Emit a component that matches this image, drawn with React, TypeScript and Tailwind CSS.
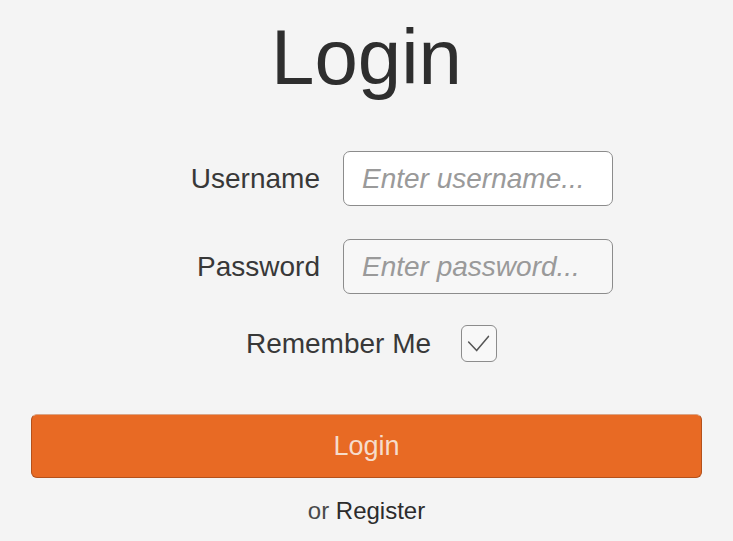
import React, { useState } from 'react';

const App: React.FC = () => {
  const [username, setUsername] = useState('');
  const [password, setPassword] = useState('');
  const [remember, setRemember] = useState(true);

  return (
    <div className="min-h-[541px] w-full bg-[#f4f4f4] flex flex-col items-center font-['Liberation_Sans',Arial,sans-serif] text-[#383838]">
      <h1 className="mt-[18px] text-[78px] leading-[79px] text-[#2e2e2e]">Login</h1>

      <div className="mt-[54px] grid grid-cols-[200px_270px] gap-x-[23px] gap-y-[33px] items-center">
        <label className="text-right text-[28px] leading-none">Username</label>
        <input
          value={username}
          onChange={e => setUsername(e.target.value)}
          placeholder="Enter username..."
          className="h-[55px] w-[270px] rounded-[7px] border border-[#8c8c8c] bg-white px-[18px] text-[28px] italic outline-none placeholder:text-[#9a9a9a]"
        />
        <label className="text-right text-[28px] leading-none">Password</label>
        <input
          type="password"
          value={password}
          onChange={e => setPassword(e.target.value)}
          placeholder="Enter password..."
          className="h-[55px] w-[270px] rounded-[7px] border border-[#8c8c8c] bg-[#f7f7f7] px-[18px] text-[28px] italic outline-none placeholder:text-[#9a9a9a]"
        />
      </div>

      <div className="mt-[31px] flex items-center gap-[30px] pl-[10px]">
        <span className="text-[28px] leading-none">Remember Me</span>
        <button
          onClick={() => setRemember(!remember)}
          className="h-[37px] w-[36px] rounded-[6px] border border-[#8c8c8c] bg-[#f8f8f8] flex items-center justify-center"
          aria-label="Remember me"
        >
          {remember && (
            <svg width="36" height="37" viewBox="0 0 36 37" fill="none">
              <path d="M7 17 L15.5 26 L28 11" stroke="#555" strokeWidth="1.6" strokeLinecap="round" strokeLinejoin="round" />
            </svg>
          )}
        </button>
      </div>

      <button className="mt-[52px] h-[64px] w-[671px] rounded-[6px] border border-[#b4511b] border-t-[#d9a486] bg-[#e86a24] text-[27px] text-[#f6dccb]">
        Login
      </button>

      <p className="mt-[21px] text-[24px] leading-[24px]">
        <span className="text-[#4a4a4a]">or </span>
        <a className="text-[#2c2c2c] cursor-pointer">Register</a>
      </p>
    </div>
  );
};

export default App;
